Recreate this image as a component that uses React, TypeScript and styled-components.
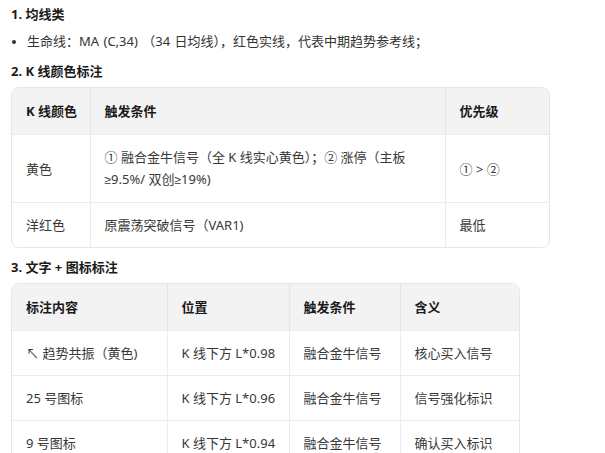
import React from "react";
import styled, { createGlobalStyle } from "styled-components";

const Global = createGlobalStyle`
  html, body { margin: 0; padding: 0; background: #ffffff; }
  body {
    font-family: "Noto Sans", "Noto Sans CJK SC", sans-serif;
    font-size: 13px;
    color: #333333;
  }
`;

const Page = styled.div`
  padding: 4px 10px 0 11px;
  display: flex;
  flex-direction: column;
  align-items: flex-start;
`;

const Heading = styled.h4<{ $gap?: number }>`
  margin: ${(p) => p.$gap ?? 0}px 0 0 0;
  font-size: 13px;
  line-height: 20px;
  font-weight: 700;
  color: #1a1a1a;
`;

const List = styled.ul`
  margin: 7px 0 0 0;
  padding: 0 0 0 16px;
  list-style: disc;
`;

const Item = styled.li`
  line-height: 20px;
  color: #333333;
  word-spacing: 1px;
  &::marker { font-size: 11px; }
`;

const TableWrap = styled.div<{ $width: number }>`
  margin-top: 6px;
  width: ${(p) => p.$width}px;
  border: 1px solid #e6e6e6;
  border-radius: 8px;
  overflow: hidden;
`;

const Table = styled.table`
  width: 100%;
  border-collapse: collapse;
  table-layout: fixed;
`;

const Th = styled.th`
  background: #f3f3f3;
  text-align: left;
  font-weight: 700;
  color: #1a1a1a;
  padding: 12px 14px;
  line-height: 22px;
  white-space: nowrap;
  border-left: 1px solid #e6e6e6;
  &:first-child { border-left: none; }
`;

const Td = styled.td`
  padding: 11px 14px;
  line-height: 22px;
  color: #383838;
  white-space: nowrap;
  vertical-align: middle;
  border-left: 1px solid #ececec;
  border-top: 1px solid #ececec;
  &:first-child { border-left: none; }
`;

const Sym = styled.span`
  font-family: "Liberation Sans", sans-serif;
  font-size: 12px;
`;

type Table1Row = [string, React.ReactNode, string];

const table1: Table1Row[] = [
  [
    "黄色",
    <>
      ① 融合金牛信号（全 K 线实心黄色）；② 涨停（主板
      <br />
      <Sym>≥</Sym>9.5%/ 双创<Sym>≥</Sym>19%)
    </>,
    "① > ②",
  ],
  ["洋红色", "原震荡突破信号（VAR1)", "最低"],
];

const table2: string[][] = [
  ["↖ 趋势共振（黄色)", "K 线下方 L*0.98", "融合金牛信号", "核心买入信号"],
  ["25 号图标", "K 线下方 L*0.96", "融合金牛信号", "信号强化标识"],
  ["9 号图标", "K 线下方 L*0.94", "融合金牛信号", "确认买入标识"],
];

export default function App() {
  return (
    <>
      <Global />
      <Page>
        <Heading>1. 均线类</Heading>
        <List>
          <Item>生命线：MA (C,34) （34 日均线），红色实线，代表中期趋势参考线；</Item>
        </List>
        <Heading $gap={10}>2. K 线颜色标注</Heading>
        <TableWrap $width={537}>
          <Table>
            <colgroup>
              <col style={{ width: 78 }} />
              <col style={{ width: 355 }} />
              <col style={{ width: 104 }} />
            </colgroup>
            <thead>
              <tr>
                <Th>K 线颜色</Th>
                <Th>触发条件</Th>
                <Th>优先级</Th>
              </tr>
            </thead>
            <tbody>
              {table1.map((r, i) => (
                <tr key={i}>
                  <Td>{r[0]}</Td>
                  <Td>{r[1]}</Td>
                  <Td>{r[2]}</Td>
                </tr>
              ))}
            </tbody>
          </Table>
        </TableWrap>
        <Heading $gap={9}>3. 文字 + 图标标注</Heading>
        <TableWrap $width={507}>
          <Table>
            <colgroup>
              <col style={{ width: 155 }} />
              <col style={{ width: 122 }} />
              <col style={{ width: 111 }} />
              <col style={{ width: 119 }} />
            </colgroup>
            <thead>
              <tr>
                <Th>标注内容</Th>
                <Th>位置</Th>
                <Th>触发条件</Th>
                <Th>含义</Th>
              </tr>
            </thead>
            <tbody>
              {table2.map((r, i) => (
                <tr key={i}>
                  {r.map((c, j) => (
                    <Td key={j}>{c}</Td>
                  ))}
                </tr>
              ))}
            </tbody>
          </Table>
        </TableWrap>
      </Page>
    </>
  );
}
